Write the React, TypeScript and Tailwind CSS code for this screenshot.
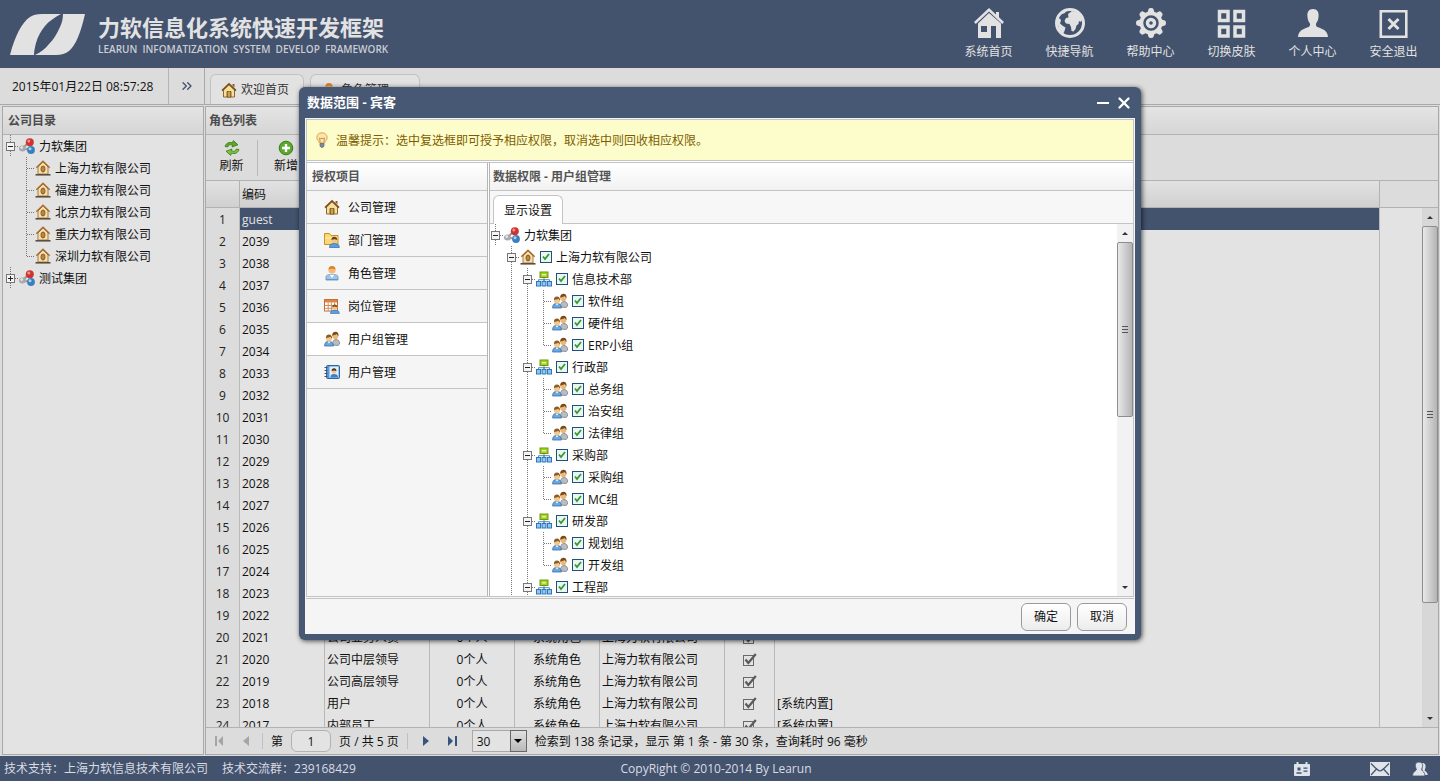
import { useState } from "react";
import type { ReactNode } from "react";
import { ChevronsRight, X } from "lucide-react";

/* ---------- icons ---------- */

type IconProps = { className?: string };

const Svg = ({ children, size = 16, className = "" }: { children: ReactNode; size?: number; className?: string }) => (
  <svg width={size} height={size} viewBox="0 0 16 16" className={`block shrink-0 ${className}`} aria-hidden="true">
    {children}
  </svg>
);

const Logo = () => (
  <svg width="76" height="42" viewBox="0 0 76 42" className="shrink-0" fill="#e2e2e2" aria-hidden="true">
    <path d="M0 41 C5 22 12 8 20 3 Q24 0 32 0 H51 C44 4 39 7 35 12 C31 17 28 22 26 29 C25 33 24 37 24 41 Z" />
    <path d="M75 0 C71 18 66 31 59 37 Q54 41 46 41 H25 C31 38 35 35 39 30 C43 26 47 20 50 13 C52 9 53 4 53 0 Z" />
  </svg>
);

const HouseIcon = ({ className }: IconProps) => (
  <Svg className={className}>
    <path d="M2.5 8v7h11V8L8 2.8z" fill="#f5df9a" stroke="#8a6a2c" />
    <path d="M1 8.6 8 1.8l7 6.8" fill="none" stroke="#7b4f1c" strokeWidth="1.6" />
    <path d="M11.5 2h2v3.5l-2-2z" fill="#9a5a2a" />
    <path d="M6 15V9.500h4V15z" fill="#b5802f" stroke="#6f4a17" strokeWidth=".8" />
    <path d="M8 9.500V15" stroke="#f5df9a" strokeWidth=".7" />
  </Svg>
);

const BranchIcon = () => (
  <Svg>
    <path d="M3 7v7h10V7L8 2z" fill="#f8dfae" stroke="#a87c40" />
    <path d="M1.300 7.800 8 1.200l6.700 6.600" fill="none" stroke="#a86f32" strokeWidth="1.500" />
    <ellipse cx="8" cy="9" rx="2" ry="3" fill="#e0a85a" stroke="#7c5426" />
    <path d="M8 6.500V12" stroke="#7c5426" strokeWidth=".8" />
    <path d="M.5 14.800h15" stroke="#5c4f40" strokeWidth="1.600" />
  </Svg>
);

const GroupIcon = () => (
  <Svg>
    <path d="M3.500 10.500 10 4M3.500 10.500 12 12" stroke="#9a9a9a" strokeWidth="2" />
    <circle cx="10.800" cy="4.200" r="4" fill="#cf332f" />
    <circle cx="9.800" cy="2.900" r="1.500" fill="#f2938a" />
    <ellipse cx="3.500" cy="10.500" rx="3.500" ry="3" fill="#a9a9ae" />
    <circle cx="2.700" cy="9.600" r="1.300" fill="#e9e9ec" />
    <circle cx="12" cy="12" r="3.900" fill="#3b7fbf" />
    <circle cx="11" cy="10.800" r="1.500" fill="#a8d3ef" />
  </Svg>
);

const OrgIcon = () => (
  <Svg>
    <path d="M8 6v4M2.500 11V8.700h11V11M8 11V8" fill="none" stroke="#5c87b5" />
    <rect x="4" y="1" width="8" height="5.500" fill="#a5cf1e" stroke="#6a9a10" />
    <path d="M6 3.700h4" stroke="#e3f39a" strokeWidth="1.600" />
    <rect x=".5" y="10.500" width="4" height="4.500" fill="#8fc7f0" stroke="#2d77bd" />
    <rect x="6" y="10.500" width="4" height="4.500" fill="#8fc7f0" stroke="#2d77bd" />
    <rect x="11.500" y="10.500" width="4" height="4.500" fill="#8fc7f0" stroke="#2d77bd" />
  </Svg>
);

const UsersIcon = () => (
  <Svg>
    <path d="M8.500 14c0-3.500 1-5.500 3.500-5.500s3.700 1.800 3.700 4.500L14 14.500z" fill="#b9bcc0" stroke="#7c8085" strokeWidth=".8" />
    <circle cx="11.300" cy="5" r="3.100" fill="#eab877" />
    <path d="M8.200 4.800C8 2 9.500.8 11.500.8s3.300 1.400 3 4.200c-1-.4-1.300-1.400-1.700-2-1.200.8-3 1-4.600 1.800z" fill="#7a4a1c" />
    <path d="M.6 15c0-3.300 1.400-4.600 4.200-4.600S9.400 11.800 9.400 15z" fill="#6aa7e0" stroke="#3570ab" strokeWidth=".8" />
    <path d="M3.600 10.600 5 12.400l1.400-1.800z" fill="#fff" />
    <circle cx="5" cy="7.400" r="3" fill="#f4c88a" />
    <path d="M2 7.200c-.2-2.600 1.200-3.700 3-3.700s3.200 1.200 3 3.900c-.9-.4-1.200-1.100-1.500-1.700C5.400 6.500 3.500 6.500 2 7.200z" fill="#8e5a24" />
  </Svg>
);

const UserIcon = () => (
  <Svg>
    <path d="M2 15v-3c0-1.800 2-2.600 6-2.600s6 .8 6 2.600v3z" fill="#9cc6ec" stroke="#5f8fbd" strokeWidth=".8" />
    <path d="M5.800 9.800 8 13l2.200-3.200z" fill="#fff" />
    <path d="M2 14.500h12" stroke="#6b96bd" />
    <circle cx="8" cy="5" r="3.600" fill="#f7b874" />
    <path d="M4.500 4.600C4.500 2 6 1 8 1s3.500 1 3.500 3.600C10 3.600 6 3.600 4.500 4.600z" fill="#d9822b" />
  </Svg>
);

const FolderUserIcon = () => (
  <Svg>
    <path d="M.5 12.500v-11h5l1.500 2h7v9z" fill="#fbd873" stroke="#c3922c" />
    <path d="M.8 6h13" stroke="#fdf0bb" />
    <path d="M5.500 15.500c0-3 1.500-4 4.800-4s5 1 5 4z" fill="#5b9ee0" stroke="#2f6bab" strokeWidth=".7" />
    <circle cx="10.300" cy="8.300" r="2.800" fill="#f4c48a" />
    <path d="M7.400 8C7.300 5.600 8.600 4.800 10.300 4.800s3.200 1 3 3.200C12 7 9 7 7.400 8z" fill="#6d431d" />
  </Svg>
);

const CalendarUserIcon = () => (
  <Svg>
    <rect x=".5" y="1.500" width="13" height="11.500" fill="#fff" stroke="#c0703a" />
    <path d="M1 2h12v2.500H1z" fill="#e0853f" />
    <path d="M1 7.500h12M1 10.300h12M4.200 4.500V13M7.400 4.500V13M10.600 4.500V13" stroke="#c9855a" strokeWidth=".9" />
    <path d="M6.500 15.500c0-2.600 1.300-3.400 4.200-3.400s4.600.8 4.600 3.400z" fill="#5b9ee0" stroke="#2f6bab" strokeWidth=".6" />
    <circle cx="10.800" cy="9.500" r="2.500" fill="#f4c48a" />
    <path d="M8.300 9.200c0-2 1-2.700 2.500-2.700s2.700.8 2.500 2.700c-1-.7-4-.7-5 0z" fill="#8b5323" />
  </Svg>
);

const BookUserIcon = () => (
  <Svg>
    <rect x="2.500" y="1.500" width="13" height="13" rx="1" fill="#5a9ad8" stroke="#2f659e" />
    <path d="M.5 3.500h3M.5 6.500h3M.5 9.500h3M.5 12.500h3" stroke="#4a5560" />
    <rect x="5.500" y="2.500" width="9" height="11" fill="#dfeffc" />
    <path d="M6.500 13.500c0-2.600 1-3.500 3.500-3.500s4 .9 4 3.500z" fill="#3e80c6" />
    <circle cx="10" cy="7.300" r="2.400" fill="#f4c48a" />
    <path d="M7.600 7c0-2 .9-2.800 2.400-2.800s2.600.8 2.400 2.800c-1-.7-3.800-.7-4.800 0z" fill="#4a3222" />
  </Svg>
);

const BulbIcon = () => (
  <Svg>
    <path d="M8 .8c3.300 0 5.200 2.200 5.200 4.800 0 2.500-2.200 3.400-2.600 5.400H5.400C5 9 2.800 8.100 2.800 5.600 2.800 3 4.700.8 8 .8z" fill="#fde3ac" stroke="#dba55a" />
    <path d="M6.200 10.500 5.500 6l1.500 1 1-1 1 1 1.500-1-.7 4.500" fill="none" stroke="#d18a35" strokeWidth=".9" />
    <path d="M6 11.500h4v2.500l-1 1.300H7L6 14z" fill="#7f8b9c" stroke="#566274" strokeWidth=".7" />
  </Svg>
);

const RefreshIcon = () => (
  <Svg>
    <path d="M1 6.500C2 3 5 1.800 8.500 2.800L9.300.6 14 4.800 8 7l.6-1.900C6 4.300 4 5 3.800 7z" fill="#5da62a" stroke="#3c7a17" strokeWidth=".8" />
    <path d="M15 9.500c-1 3.500-4 4.700-7.500 3.700l-.8 2.200L2 11.200 8 9l-.6 1.900c2.600.8 4.600.1 4.800-1.900z" fill="#7cc142" stroke="#3c7a17" strokeWidth=".8" />
  </Svg>
);

const AddIcon = () => (
  <Svg>
    <circle cx="8" cy="8" r="6.800" fill="#5aa82c" stroke="#3c7c18" />
    <path d="M8 4v8M4 8h8" stroke="#fff" strokeWidth="2.400" />
  </Svg>
);

const TickIcon = () => (
  <Svg className="mx-auto">
    <rect x="1.500" y="4.500" width="10" height="10" fill="none" stroke="#6a6a6a" />
    <path d="M3.500 8.500 6.300 12 13.800 3" fill="none" stroke="#5a5a5a" strokeWidth="2.200" />
  </Svg>
);

const NavSvg = ({ children }: { children: ReactNode }) => (
  <svg width="30" height="30" viewBox="0 0 30 30" fill="#e2e2e2" aria-hidden="true">
    {children}
  </svg>
);

const NavHome = () => (
  <NavSvg>
    <path d="M15 0 0 14l1.800 2L15 3.600 28.200 16l1.800-2-5-4.700V4h-3v2.500z" />
    <path fillRule="evenodd" d="M15 5 4 15.500V30h23V15.500zM7 18h6v6H7zM17 18h5v12h-5z" />
  </NavSvg>
);

const NavGlobe = () => (
  <NavSvg>
    <circle cx="15" cy="15" r="13.500" fill="none" stroke="#e2e2e2" strokeWidth="3" />
    <path d="M13 6l4-3 6 1.500 4.500 6L26 14l-2-1-.5 3-2 1.500-1 3.500-2 2.500-2-.5-.5-4-1.500-3-3.500-.5-1.500-2.500 1.500-3 2.500-.5z" />
    <path d="M2 11l3-.5 1 2-1 3 3 2.500 2.500 1.500-1 3.500L8 26l-4-4z" />
    <path d="M7 4l4-1.500L10 5 7.500 6z" />
  </NavSvg>
);

const TEETH = [0, 45, 90, 135, 180, 225, 270, 315];

const NavGear = () => (
  <NavSvg>
    {TEETH.map((a) => (
      <path key={a} d="M11 6 12.500 1.200Q12.800 0 15 0t2.500 1.200L19 6z" transform={`rotate(${a} 15 15)`} />
    ))}
    <circle cx="15" cy="15" r="11.500" />
    <circle cx="15" cy="15" r="6.500" fill="none" stroke="#43526d" strokeWidth="2.500" />
    <circle cx="15" cy="15" r="1.800" fill="#43526d" />
  </NavSvg>
);

const NavGrid = () => (
  <NavSvg>
    <path fill="none" stroke="#e2e2e2" strokeWidth="3.500" d="M2.500 3.500h8.500v9H2.500zM18 3.500h8.500v9H18zM2.500 19h8.500v9H2.500zM18 19h8.500v9H18z" />
  </NavSvg>
);

const NavPerson = () => (
  <NavSvg>
    <path d="M15 1c4 0 6 2.800 5.600 7.200-.2 3.300-1.200 5.300-2.500 7.200-.6 1.700.2 3 1.900 3.900 3.800 1.700 9.500 2.700 10 9.700H0c.5-7 6.200-8 10-9.700 1.700-.9 2.500-2.200 1.900-3.900-1.300-1.900-2.300-3.900-2.500-7.200C9 3.800 11 1 15 1z" />
  </NavSvg>
);

const NavExit = () => (
  <NavSvg>
    <path fill="none" stroke="#e2e2e2" strokeWidth="2.600" d="M1.800 3.300h25.500v25.400H1.800z" />
    <path fill="none" stroke="#e2e2e2" strokeWidth="3" d="m9.500 11 10 10M19.500 11l-10 10" />
  </NavSvg>
);

/* ---------- data ---------- */

const NAV: { label: string; icon: ReactNode }[] = [
  { label: "系统首页", icon: <NavHome /> },
  { label: "快捷导航", icon: <NavGlobe /> },
  { label: "帮助中心", icon: <NavGear /> },
  { label: "切换皮肤", icon: <NavGrid /> },
  { label: "个人中心", icon: <NavPerson /> },
  { label: "安全退出", icon: <NavExit /> },
];

const COMPANIES = ["上海力软有限公司", "福建力软有限公司", "北京力软有限公司", "重庆力软有限公司", "深圳力软有限公司"];

const MENU: { label: string; icon: ReactNode }[] = [
  { label: "公司管理", icon: <HouseIcon /> },
  { label: "部门管理", icon: <FolderUserIcon /> },
  { label: "角色管理", icon: <UserIcon /> },
  { label: "岗位管理", icon: <CalendarUserIcon /> },
  { label: "用户组管理", icon: <UsersIcon /> },
  { label: "用户管理", icon: <BookUserIcon /> },
];

const DEPARTMENTS = [
  { name: "信息技术部", groups: ["软件组", "硬件组", "ERP小组"] },
  { name: "行政部", groups: ["总务组", "治安组", "法律组"] },
  { name: "采购部", groups: ["采购组", "MC组"] },
  { name: "研发部", groups: ["规划组", "开发组"] },
  { name: "工程部", groups: [] },
];

type Role = { code: string; name?: string; note?: string };

const NAMED: Record<string, Role> = {
  "2021": { code: "2021", name: "公司业务人员" },
  "2020": { code: "2020", name: "公司中层领导" },
  "2019": { code: "2019", name: "公司高层领导" },
  "2018": { code: "2018", name: "用户", note: "[系统内置]" },
  "2017": { code: "2017", name: "内部员工", note: "[系统内置]" },
};

const ROLES: Role[] = [
  { code: "guest" },
  ...Array.from({ length: 23 }, (_, i) => String(2039 - i)).map((code) => NAMED[code] ?? { code }),
];

/* ---------- tree pieces ---------- */

// One 16x22 slot of dotted guide line
function Guide({ kind }: { kind: "line" | "tee" | "end" | "blank" }) {
  return (
    <svg width="16" height="22" viewBox="0 0 16 22" className="shrink-0" fill="none" stroke="#777" strokeDasharray="1 1" aria-hidden="true">
      {(kind === "line" || kind === "tee") && <path d="M7.500 0v22" />}
      {kind === "end" && <path d="M7.500 0v11" />}
      {(kind === "tee" || kind === "end") && <path d="M8 11.500h8" />}
    </svg>
  );
}

function Toggle({ open = true, label, narrow = false }: { open?: boolean; label: string; narrow?: boolean }) {
  return (
    <button type="button" aria-label={label} className={narrow ? "w-3.5 shrink-0" : "w-4 shrink-0"}>
      <svg width={narrow ? 14 : 16} height="22" viewBox={narrow ? "2 0 14 22" : "0 0 16 22"} className="block" fill="none" aria-hidden="true">
        <path d="M7.500 0v22M12 11.500h4" stroke="#777" strokeDasharray="1 1" />
        <rect x="3.500" y="7.500" width="8" height="8" fill="#f4f4f4" stroke="#777" />
        <path d={open ? "M5 11.500h5" : "M5 11.500h5M7.500 9v5"} stroke="#222" />
      </svg>
    </button>
  );
}

function Check({ label }: { label: string }) {
  return (
    <label className="ml-1 flex items-center gap-1 whitespace-nowrap">
      <span className="relative block size-3">
        <input type="checkbox" defaultChecked className="block size-3 appearance-none border border-[#1c5180] bg-[#eef5ee]" />
        <svg width="12" height="12" viewBox="0 0 12 12" className="pointer-events-none absolute inset-0" aria-hidden="true">
          <path d="M3 5.500 5 8l4-5" fill="none" stroke="#2f9a3a" strokeWidth="1.800" />
        </svg>
      </span>
      {label}
    </label>
  );
}

function ScrollBar({ thumb }: { thumb: string }) {
  return (
    <div className="flex w-4 shrink-0 flex-col bg-black/5" aria-hidden="true">
      <div className="flex h-[18px] items-center justify-center">
        <span className="border-x-[3px] border-b-[3px] border-x-transparent border-b-[#333]" />
      </div>
      <div className="min-h-0 flex-1">
        <div className={`flex flex-col items-center justify-center gap-px rounded-xs border border-[#8d8d8d] bg-linear-to-r from-[#e9e9e9] to-[#b4b4b4] ${thumb}`}>
          <span className="h-px w-1.5 bg-[#555]" />
          <span className="my-px h-px w-1.5 bg-[#555]" />
          <span className="h-px w-1.5 bg-[#555]" />
        </div>
      </div>
      <div className="flex h-[18px] items-center justify-center">
        <span className="border-x-[3px] border-t-[3px] border-x-transparent border-t-[#333]" />
      </div>
    </div>
  );
}

/* ---------- page sections ---------- */

function Header() {
  return (
    <header className="flex h-[68px] shrink-0 items-start justify-between bg-[#43526d] text-[#e2e2e2]">
      <div className="flex items-start pt-3.5 pl-2.5">
        <Logo />
        <div className="ml-3">
          <h1 className="text-[22px] leading-[26px] font-bold whitespace-nowrap">力软信息化系统快速开发框架</h1>
          <p className="text-[10px] leading-[18px] font-semibold whitespace-pre text-[#c9cdd5]">
            {"LEARUN  INFOMATIZATION  SYSTEM  DEVELOP  FRAMEWORK"}
          </p>
        </div>
      </div>
      <nav className="flex pt-2 pr-1.5">
        {NAV.map((n) => (
          <a key={n.label} href="#" className="flex w-[81px] flex-col items-center gap-1">
            {n.icon}
            <span className="leading-5">{n.label}</span>
          </a>
        ))}
      </nav>
    </header>
  );
}

function TabBar() {
  return (
    <div className="flex h-[37px] shrink-0 border-b border-[#a9a9a9] bg-[#dcdcdc]">
      <div className="flex w-[169px] items-center border-r border-[#b5b5b5] pl-3">2015年01月22日 08:57:28</div>
      <button type="button" aria-label="展开" className="flex w-9 items-center justify-center border-r border-[#a9a9a9] text-[#43526d]">
        <ChevronsRight size={16} />
      </button>
      <div className="flex items-end gap-1.5 pl-[5px] text-[#333]">
        <button type="button" className="flex h-[30px] w-[94px] items-center gap-1 rounded-t-md border border-b-0 border-[#c2c2c2] bg-[#e2e2e2] pl-2.5">
          <HouseIcon /> 欢迎首页
        </button>
        <button type="button" className="flex h-[30px] w-[110px] items-center gap-1 rounded-t-md border border-b-0 border-[#c2c2c2] bg-[#e2e2e2] pl-2.5">
          <UserIcon /> 角色管理 <X size={10} className="ml-1" />
        </button>
      </div>
    </div>
  );
}

const panelTitle = "h-7 border-b border-[#b2b2b2] bg-linear-to-b from-[#e4e4e4] to-[#d6d6d6] leading-7 font-bold text-[#4c4c4c]";

function CompanyTree() {
  return (
    <aside className="w-[202px] shrink-0 border border-[#a9a9a9] bg-[#e3e3e3]">
      <h2 className={`pl-[5px] ${panelTitle}`}>公司目录</h2>
      <ul>
        <li className="flex h-[22px] items-center">
          <Toggle label="折叠" />
          <GroupIcon />
          <span className="ml-1">力软集团</span>
        </li>
        {COMPANIES.map((c, i) => (
          <li key={c} className="flex h-[22px] items-center">
            <Guide kind="blank" />
            <Guide kind={i === COMPANIES.length - 1 ? "end" : "tee"} />
            <BranchIcon />
            <span className="ml-1">{c}</span>
          </li>
        ))}
        <li className="flex h-[22px] items-center">
          <Toggle open={false} label="展开" />
          <GroupIcon />
          <span className="ml-1">测试集团</span>
        </li>
      </ul>
    </aside>
  );
}

const cell = "border-r border-[#b9b9b9]";

function RoleTable() {
  return (
    <table className="w-[1174px] table-fixed border-separate border-spacing-0">
      <colgroup>
        <col className="w-[34px]" />
        <col className="w-[85px]" />
        <col className="w-[105px]" />
        <col className="w-[85px]" />
        <col className="w-[85px]" />
        <col className="w-[125px]" />
        <col className="w-[50px]" />
        <col />
      </colgroup>
      <thead>
        <tr className="h-[27px] bg-linear-to-b from-[#e2e2e2] to-[#cfcfcf] text-left">
          {["", "编码", "名称", "成员", "类型", "公司", "有效", "说明"].map((h) => (
            <th key={h} className="border-r border-b border-[#b2b2b2] pl-0.5 font-normal">{h}</th>
          ))}
        </tr>
      </thead>
      <tbody>
        {ROLES.map((r, i) => (
          <tr key={r.code} className={i === 0 ? "h-[22px] bg-[#43526d] text-[#e2e2e2]" : "h-[22px]"}>
            <td className={`bg-[#dcdcdc] text-center text-[#222] ${cell}`}>{i + 1}</td>
            <td className={`pl-0.5 ${cell}`}>{r.code}</td>
            <td className={`pl-0.5 ${cell}`}>{r.name}</td>
            <td className={`text-center ${cell}`}>{r.name && "0个人"}</td>
            <td className={`text-center ${cell}`}>{r.name && "系统角色"}</td>
            <td className={`pl-0.5 ${cell}`}>{r.name && "上海力软有限公司"}</td>
            <td className={cell}>{r.name && <TickIcon />}</td>
            <td className={`pl-0.5 ${cell}`}>{r.note}</td>
          </tr>
        ))}
      </tbody>
    </table>
  );
}

function Pager() {
  return (
    <div className="flex h-[27px] shrink-0 items-center border-t border-[#b2b2b2] bg-[#dcdcdc]">
      <button type="button" aria-label="首页" className="ml-2 text-[#a5a5a5]">
        <svg width="11" height="12" viewBox="0 0 11 12" fill="currentColor"><path d="M1 1h2v10H1zM9 1v10L4 6z" /></svg>
      </button>
      <button type="button" aria-label="上一页" className="ml-4 text-[#a5a5a5]">
        <svg width="9" height="12" viewBox="0 0 9 12" fill="currentColor"><path d="M8 1v10L2 6z" /></svg>
      </button>
      <span className="mr-2 ml-3 h-4 w-px bg-[#c0c0c0]" />
      <label className="flex items-center gap-2">
        第
        <input defaultValue="1" className="h-[22px] w-10 rounded-md border border-[#b2b2b2] bg-[#e3e3e3] text-center" />
      </label>
      <span className="ml-2">页 / 共 5 页</span>
      <span className="mx-2 h-4 w-px bg-[#c0c0c0]" />
      <button type="button" aria-label="下一页" className="ml-1.5 text-[#36547c]">
        <svg width="9" height="12" viewBox="0 0 9 12" fill="currentColor"><path d="M1 1v10l6-5z" /></svg>
      </button>
      <button type="button" aria-label="末页" className="ml-4 text-[#36547c]">
        <svg width="11" height="12" viewBox="0 0 11 12" fill="currentColor"><path d="M1 1v10l5-5zM8 1h2v10H8z" /></svg>
      </button>
      <div className="relative ml-3.5">
        <select aria-label="每页条数" className="block h-[22px] w-[55px] appearance-none border border-[#a9a9a9] bg-[#e3e3e3] pl-1">
          <option>30</option>
        </select>
        <span className="pointer-events-none absolute top-0 right-0 flex h-[22px] w-[17px] items-center justify-center border border-[#666] bg-linear-to-b from-[#e0e0e0] to-[#b9b9b9]">
          <span className="border-x-[4px] border-t-[4px] border-x-transparent border-t-black" />
        </span>
      </div>
      <span className="ml-2 whitespace-nowrap">检索到 138 条记录，显示 第 1 条 - 第 30 条，查询耗时 96 毫秒</span>
    </div>
  );
}

function RolePanel() {
  return (
    <main className="flex min-w-0 flex-1 flex-col border border-[#a9a9a9] bg-[#e3e3e3]">
      <h2 className={`shrink-0 pl-[3px] ${panelTitle}`}>角色列表</h2>
      <div className="flex h-[46px] shrink-0 items-center border-b border-[#b2b2b2] bg-[#dcdcdc]">
        <button type="button" className="flex w-[51px] flex-col items-center leading-5">
          <RefreshIcon /> 刷新
        </button>
        <span className="h-9 w-px bg-[#b9b9b9]" />
        <button type="button" className="ml-0.5 flex w-[52px] flex-col items-center leading-5">
          <AddIcon /> 新增
        </button>
      </div>
      <div className="relative flex min-h-0 flex-1 flex-col">
        <div className="h-[27px] shrink-0 border-b border-[#b2b2b2] bg-[#dcdcdc]" />
        <div className="flex min-h-0 flex-1 justify-end">
          <ScrollBar thumb="h-[78%]" />
        </div>
        <div className="absolute inset-y-0 right-4 left-0 overflow-hidden">
          <RoleTable />
        </div>
      </div>
      <Pager />
    </main>
  );
}

function DataScopeDialog() {
  const [active, setActive] = useState(4);
  const title = "h-7 border-b border-[#c4c4c4] bg-linear-to-b from-white to-[#f2f2f2] leading-7 font-bold text-[#555]";

  return (
    <section role="dialog" aria-label="数据范围 - 宾客" className="w-[842px] max-w-full rounded-md bg-[#475874] px-[6px] pb-[6px] shadow-[1px_1px_5px_rgba(0,0,0,0.7)]">
      <header className="flex h-[31px] items-center justify-between px-0.5 text-white">
        <h2 className="text-[13px] font-bold">数据范围 - 宾客</h2>
        <div className="flex items-center gap-1">
          <button type="button" aria-label="最小化" className="flex size-4 items-center justify-center">
            <span className="h-0.5 w-3 bg-white" />
          </button>
          <button type="button" aria-label="关闭"><X size={18} strokeWidth={3} /></button>
        </div>
      </header>

      <div className="bg-[#f5f5f5] px-px pt-px">
        <div className="border border-[#c4c4c4] bg-white">
          <p className="flex h-[41px] items-center gap-1.5 border-b border-[#c4c4c4] bg-[#fdfdcb] pl-[7px] text-[#7d5d00]">
            <BulbIcon /> 温馨提示：选中复选框即可授予相应权限，取消选中则回收相应权限。
          </p>
          <div className="mt-px flex h-[434px] gap-px border-t border-[#c4c4c4]">
            <div className="w-[181px] shrink-0 border-r border-[#b5b5b5] bg-[#f5f5f5]">
              <h3 className={`pl-[5px] ${title}`}>授权项目</h3>
              <ul>
                {MENU.map((m, i) => (
                  <li key={m.label} className={active === i ? "border-b border-[#c4c4c4] bg-white" : "border-b border-[#c4c4c4]"}>
                    <button type="button" onClick={() => setActive(i)} className="flex h-8 w-full items-center gap-2 pl-[17px]">
                      {m.icon} {m.label}
                    </button>
                  </li>
                ))}
              </ul>
            </div>
            <div className="flex min-w-0 flex-1 flex-col border-l border-[#b5b5b5]">
              <h3 className={`shrink-0 pl-[3px] ${title}`}>数据权限 - 用户组管理</h3>
              <div className="flex h-[33px] shrink-0 items-end border-b border-[#c4c4c4] bg-[#f7f7f7] pl-[3px]">
                <button type="button" className="-mb-px h-[29px] w-[70px] rounded-t-md border border-b-0 border-[#c4c4c4] bg-white">
                  显示设置
                </button>
              </div>
              <div className="flex min-h-0 flex-1">
                <ul className="min-w-0 flex-1 overflow-hidden">
                  <li className="flex h-[22px] items-center">
                    <Toggle narrow label="折叠" />
                    <GroupIcon />
                    <span className="ml-1">力软集团</span>
                  </li>
                  <li className="flex h-[22px] items-center pl-3.5">
                    <Toggle label="折叠" />
                    <BranchIcon />
                    <Check label="上海力软有限公司" />
                  </li>
                  {DEPARTMENTS.map((d) => (
                    <li key={d.name}>
                      <div className="flex h-[22px] items-center pl-3.5">
                        <Guide kind="line" />
                        <Toggle label="折叠" />
                        <OrgIcon />
                        <Check label={d.name} />
                      </div>
                      {d.groups.map((g, i) => (
                        <div key={g} className="flex h-[22px] items-center pl-3.5">
                          <Guide kind="line" />
                          <Guide kind="line" />
                          <Guide kind={i === d.groups.length - 1 ? "end" : "tee"} />
                          <UsersIcon />
                          <Check label={g} />
                        </div>
                      ))}
                    </li>
                  ))}
                </ul>
                <ScrollBar thumb="h-[52%]" />
              </div>
            </div>
          </div>
        </div>
        <footer className="mt-px flex h-9 items-center justify-end gap-1.5 border-t border-[#c4c4c4] pr-[7px]">
          {["确定", "取消"].map((b) => (
            <button key={b} type="button" className="h-7 w-[50px] rounded-md border border-[#9a9a9a] bg-linear-to-b from-white to-[#ececec]">
              {b}
            </button>
          ))}
        </footer>
      </div>
    </section>
  );
}

function Footer() {
  return (
    <footer className="flex h-[25px] shrink-0 items-center bg-[#43526d] text-[#d8dce3]">
      <div className="flex flex-1 gap-3.5 pl-1 whitespace-nowrap">
        <span>技术支持：上海力软信息技术有限公司</span>
        <span>技术交流群：239168429</span>
      </div>
      <span className="whitespace-nowrap">CopyRight © 2010-2014 By Learun</span>
      <div className="flex flex-1 items-center justify-end pr-3">
        <a href="#" aria-label="通讯录" className="mr-[60px]">
          <svg width="16" height="16" viewBox="0 0 16 16" fill="#dfe3ea">
            <path d="M0 3.500Q0 3 1 3h1.500V1h2v2h7V1h2v2H15q1 0 1 .5V14q0 1-1 1H1q-1 0-1-1z" />
            <path d="M3.500 6.500h3v3h-3zM2.500 11.300h5v1.400h-5zM9.500 6.500h4v1.200h-4zM9.500 9.500h4v1.200h-4z" fill="#43526d" />
          </svg>
        </a>
        <a href="#" aria-label="邮件" className="mr-[22px]">
          <svg width="20" height="14" viewBox="0 0 20 14">
            <path d="M0 0h20v14H0z" fill="#dfe3ea" />
            <path d="M1 1.500Q8 9 10 9t9-7.500M1 13l5.500-6M19 13l-5.500-6" fill="none" stroke="#43526d" strokeWidth="1.200" />
          </svg>
        </a>
        <a href="#" aria-label="在线用户">
          <svg width="16" height="16" viewBox="0 0 16 16" fill="#dfe3ea">
            <path d="M10 2c3 0 4 2 3.500 4.500-.3 1.500-.8 2-.8 3 .5 1 3 1.500 3 4.500h-5z" />
            <path d="M7 1c3 0 4 2 3.600 4.500-.3 1.500-1 2.300-1 3.300C10.500 10.500 13 11 13 15H.5c0-4 2.600-4.500 3.900-6.200 0-1-.8-1.800-1-3.300C3 3 4 1 7 1z" stroke="#43526d" strokeWidth=".8" />
          </svg>
        </a>
      </div>
    </footer>
  );
}

export default function App() {
  return (
    <div className="relative flex h-screen flex-col overflow-hidden bg-[#dcdcdc] font-['Open_Sans','Noto_Sans_CJK_SC',sans-serif] text-[12px] leading-[19px] text-[#111]">
      <Header />
      <TabBar />
      <div className="flex min-h-0 flex-1 gap-px px-px pt-px pb-px pl-0.5">
        <CompanyTree />
        <RolePanel />
      </div>
      <Footer />
      <div className="absolute inset-x-0 top-[87px] flex justify-center">
        <DataScopeDialog />
      </div>
    </div>
  );
}
